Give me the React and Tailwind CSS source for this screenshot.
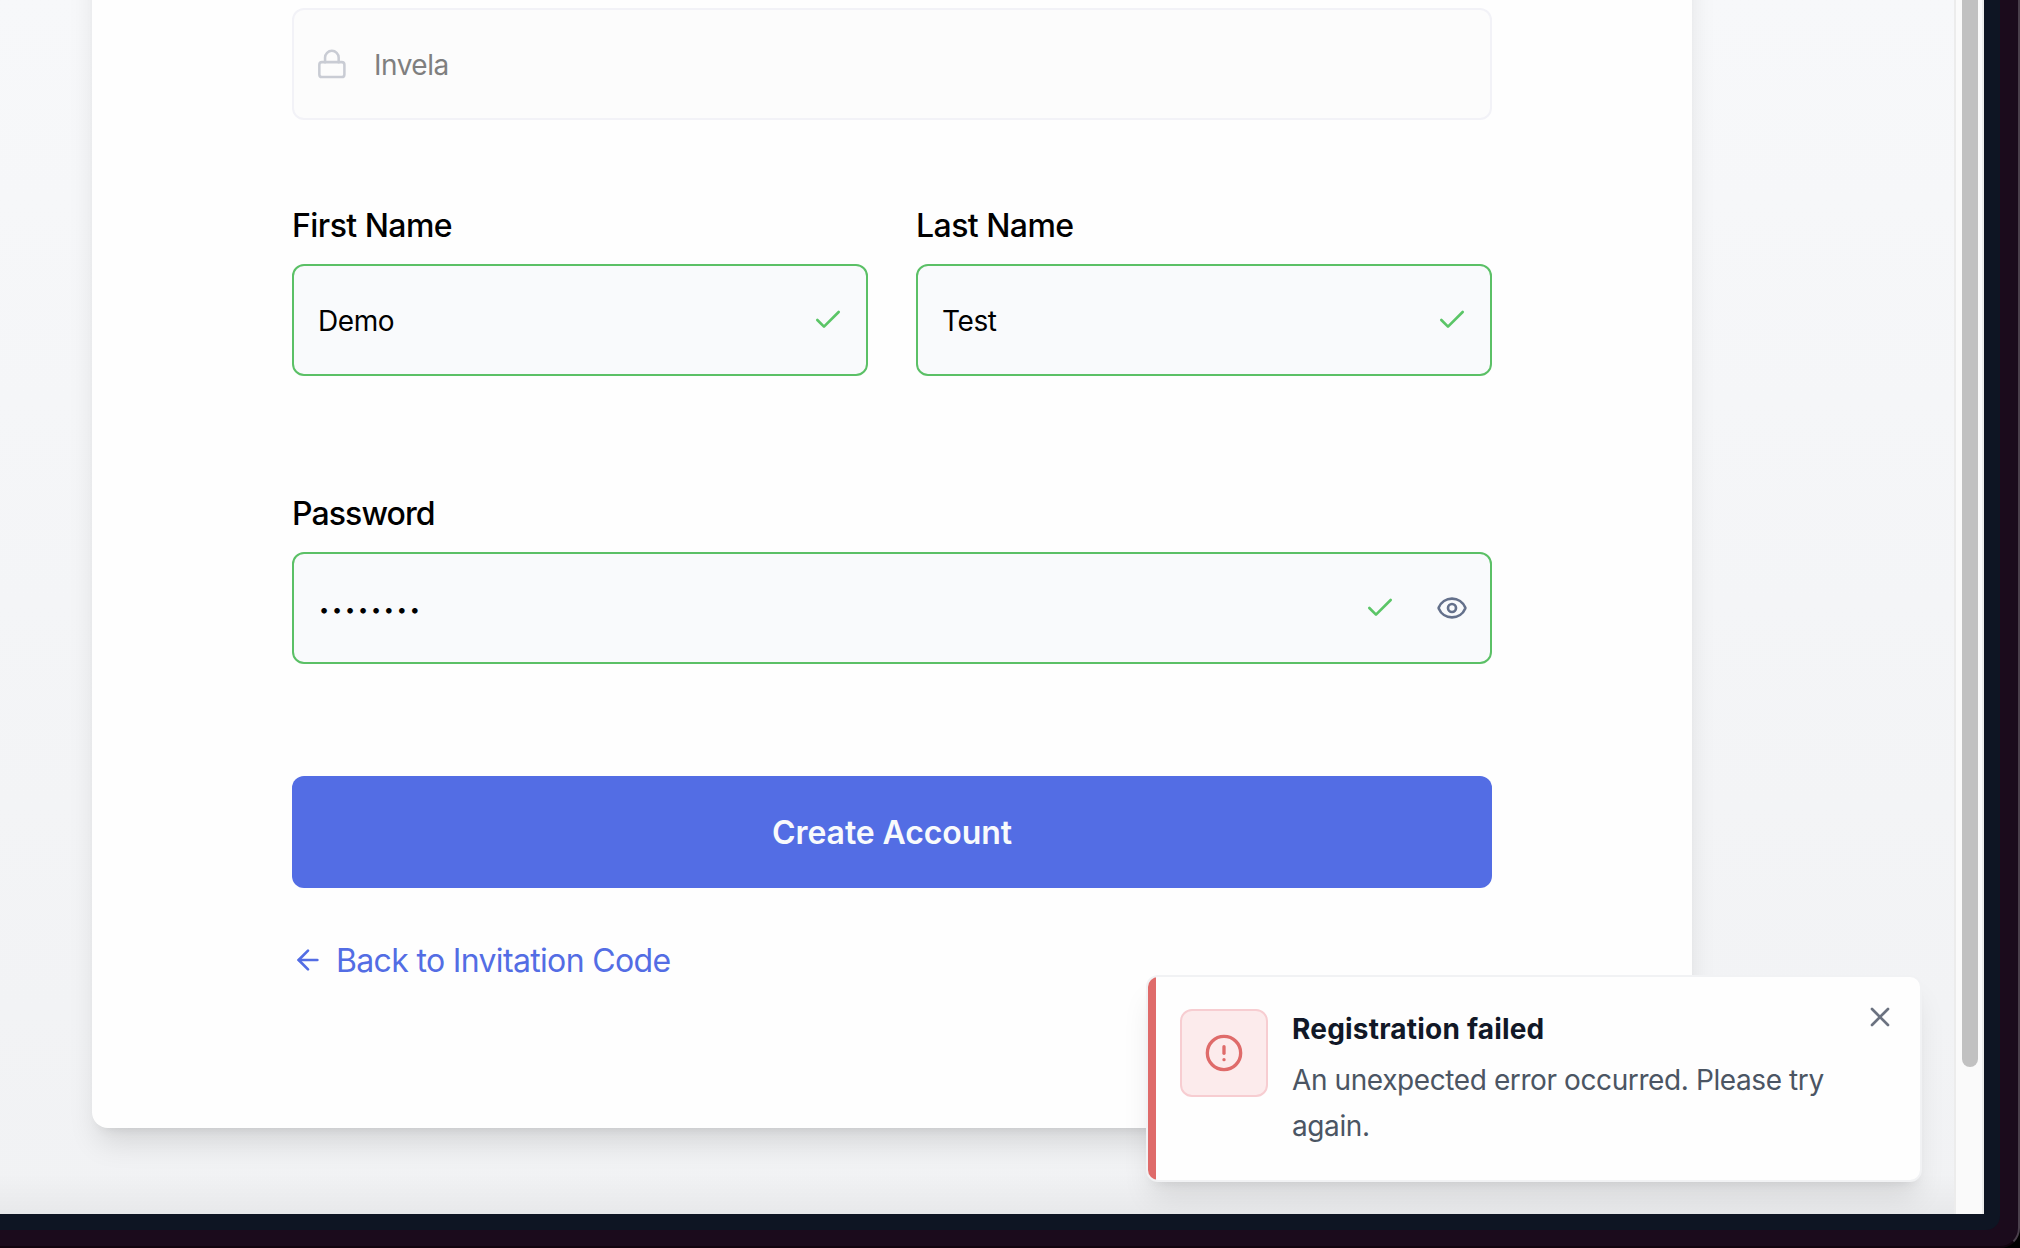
import React from "react";
import { ArrowLeft, Check, Eye, X } from "lucide-react";

function LockIcon() {
  return (
    <svg className="size-8 text-[#c9ccd4]" viewBox="0 0 24 24" fill="none" stroke="currentColor" strokeWidth="1.9" strokeLinecap="round" strokeLinejoin="round">
      <rect x="2.5" y="10.6" width="18.8" height="11.2" rx="2" />
      <path d="M6.8 10.6V7.2a5.1 5.1 0 0 1 10.2 0V10.6" />
    </svg>
  );
}

function AlertIcon() {
  return (
    <svg className="size-10 text-[#df6b6a]" viewBox="0 0 24 24" fill="none" stroke="currentColor" strokeWidth="2" strokeLinecap="round">
      <circle cx="12" cy="12" r="10" />
      <path d="M12 8.2v4" />
      <path d="M12 16h.01" />
    </svg>
  );
}

function Field({ label, labelClass = "tracking-[-0.55px]", children }) {
  return (
    <div className="flex min-w-0 flex-1 flex-col">
      <label className={`mb-6 h-7 text-[32px] leading-7 font-medium text-black ${labelClass}`}>{label}</label>
      <div className="flex h-28 items-center justify-between rounded-xl border-2 border-[#5bc066] bg-[#f9fafc] pr-[22px] pl-6 text-[28px] leading-none tracking-[-0.4px] text-black">
        {children}
      </div>
    </div>
  );
}

function Tick() {
  return <Check className="size-8 text-[#5bc567]" strokeWidth={2} />;
}

function Toast() {
  return (
    <div className="absolute top-[975px] left-[1146px] flex h-[207px] w-[776px] rounded-xl border-2 border-[#f1f2f4] bg-[#fefefe] shadow-[0_20px_30px_-6px_rgba(0,0,0,0.1),0_8px_12px_-8px_rgba(0,0,0,0.1)]">
      <div className="flex flex-1 overflow-hidden rounded-[10px]">
        <div className="w-2 bg-[#df6b6a]" />
        <div className="mt-8 ml-6 flex size-[88px] items-center justify-center rounded-xl border-2 border-[#f7cdd1] bg-[#fcebec]">
          <AlertIcon />
        </div>
        <div className="ml-6 flex-1 pt-8">
          <h2 className="h-10 text-[28px] leading-10 font-bold tracking-[0.2px] text-[#111827]">Registration failed</h2>
          <p className="mt-2 w-[560px] text-[28px] leading-[46px] tracking-[-0.4px] text-[#4b5563]">
            An unexpected error occurred. Please try again.
          </p>
        </div>
        <X className="mt-6 mr-6 size-8 text-[#6b7280]" strokeWidth={2} />
      </div>
    </div>
  );
}

export default function App() {
  return (
    <div className="h-[1248px] w-[2020px] overflow-hidden bg-black font-['Inter',sans-serif]">
      <div className="h-[1248px] w-[2020px] overflow-hidden rounded-br-[20px] border-r-2 border-b-2 border-r-[#4a3f4b] border-b-[#12040f] bg-[#1b0b1c]">
        <div className="h-[1230px] w-[2000px] overflow-hidden rounded-br-[14px] bg-[#0e1523]">
          <div className="relative flex h-[1214px] w-[1984px] overflow-hidden bg-linear-to-b from-[#f7f8fa] to-[#f1f2f4]">
            <main className="w-[1954px] pl-[92px]">
              <div className="-mt-16 h-[1192px] w-[1600px] rounded-b-2xl bg-[#fefefe] px-[200px] pt-[72px] shadow-[0_20px_30px_-6px_rgba(0,0,0,0.12),0_8px_12px_-8px_rgba(0,0,0,0.1)]">
                <div className="flex h-28 items-center rounded-xl border-2 border-[#f2f2f7] bg-[#fcfcfc] pl-[22px] text-[28px] leading-none tracking-[-0.5px] text-[#7f7f7f]">
                  <LockIcon />
                  <span className="ml-[26px] pt-0.5">Invela</span>
                </div>
                <div className="mt-[92px] flex gap-12">
                  <Field label="First Name">
                    <span className="pt-0.5">Demo</span>
                    <Tick />
                  </Field>
                  <Field label="Last Name">
                    <span className="pt-0.5">Test</span>
                    <Tick />
                  </Field>
                </div>
                <div className="mt-[124px] flex">
                  <Field label="Password" labelClass="tracking-[-0.9px]">
                    <span className="ml-px pt-1 text-[18px] tracking-[2.85px]">••••••••</span>
                    <div className="flex gap-10">
                      <Tick />
                      <Eye className="size-8 text-[#64708b]" strokeWidth={2} />
                    </div>
                  </Field>
                </div>
                <button className="mt-28 flex h-28 w-full items-center justify-center rounded-xl bg-[#536de4] pt-0.5 text-[32px] leading-none font-semibold tracking-[-0.1px] text-[#f8fafc]">
                  Create Account
                </button>
                <a className="mt-12 flex h-12 items-center text-[32px] leading-[48px] tracking-[-0.66px] text-[#536de4]">
                  <ArrowLeft className="size-8" strokeWidth={2} />
                  <span className="ml-3 pt-0.5">Back to Invitation Code</span>
                </a>
              </div>
            </main>
            <div className="flex w-[30px] border-x-2 border-[#ececec] bg-[#fafafa] pl-1.5">
              <div className="h-[1067px] w-4 rounded-b-full bg-[#c1c1c1]" />
            </div>
            <div className="absolute bottom-0 left-0 h-10 w-[1954px] bg-linear-to-b from-transparent to-black/4" />
            <Toast />
          </div>
        </div>
      </div>
    </div>
  );
}
